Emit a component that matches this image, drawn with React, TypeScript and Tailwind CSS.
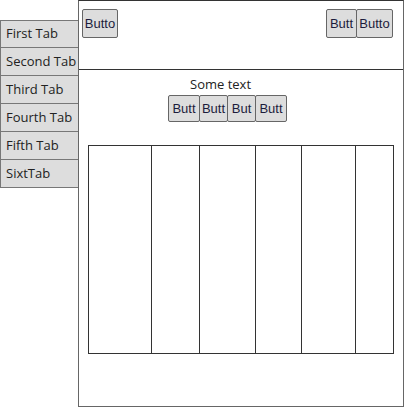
import React from "react";

const tabs = ["First Tab", "Second Tab", "Third Tab", "Fourth Tab", "Fifth Tab", "SixtTab"];

function Btn({ label, w }: { label: string; w: string }) {
  return (
    <div
      className={`${w} h-[29px] flex items-center justify-center overflow-hidden border border-[#666] bg-[#dddddd] rounded-[2px] text-[13px] text-[#1c1c3c] whitespace-nowrap`}
    >
      {label}
    </div>
  );
}

function SmallBtn({ label, w }: { label: string; w: string }) {
  return (
    <div
      className={`${w} h-[27px] flex items-center justify-center overflow-hidden border border-[#666] bg-[#dddddd] rounded-[2px] text-[13px] text-[#1c1c3c] whitespace-nowrap`}
    >
      {label}
    </div>
  );
}

export default function App() {
  return (
    <div
      className="w-[404px] h-[407px] bg-white flex"
      style={{ fontFamily: '"Liberation Sans", Arial, sans-serif' }}
    >
      <div className="w-[79px] mt-[20px] flex flex-col shrink-0">
        {tabs.map((t, i) => (
          <div
            key={t}
            className={`h-[28px] bg-[#dddddd] border-l border-r border-b border-[#777] ${i === 0 ? "border-t" : ""} flex items-center pl-[5px] text-[13px] text-[#222]`}
            style={{ fontFamily: '"Open Sans", "Liberation Sans", sans-serif' }}
          >
            {t}
          </div>
        ))}
      </div>
      <div className="-ml-px w-[326px] h-[407px] border border-[#666] border-t-[#333] flex flex-col">
        <div className="h-[69px] border-b border-[#333] flex items-start pt-[8px] pl-[3px] pr-[10px]">
          <Btn label="Butto" w="w-[36px]" />
          <div className="flex-1" />
          <Btn label="Butt" w="w-[31px]" />
          <div className="-ml-px">
            <Btn label="Butto" w="w-[37px]" />
          </div>
        </div>
        <div className="flex flex-col mt-[6px]">
          <div
            className="text-[13px] text-[#222] h-[16px] leading-[16px] pl-[111px]"
            style={{ fontFamily: '"Open Sans", "Liberation Sans", sans-serif' }}
          >
            Some text
          </div>
          <div className="flex mt-[3px] pl-[89px]">
            <SmallBtn label="Butt" w="w-[32px]" />
            <div className="-ml-px"><SmallBtn label="Butt" w="w-[29px]" /></div>
            <div className="-ml-px"><SmallBtn label="But" w="w-[29px]" /></div>
            <div className="-ml-px"><SmallBtn label="Butt" w="w-[32px]" /></div>
          </div>
        </div>
        <div className="mt-[23px] mx-[9px] h-[209px] border border-[#333] flex">
          <div className="w-[63px] border-r border-[#333]" />
          <div className="w-[48px] border-r border-[#333]" />
          <div className="w-[56px] border-r border-[#333]" />
          <div className="w-[46px] border-r border-[#333]" />
          <div className="w-[54px] border-r border-[#333]" />
          <div className="flex-1" />
        </div>
      </div>
    </div>
  );
}
